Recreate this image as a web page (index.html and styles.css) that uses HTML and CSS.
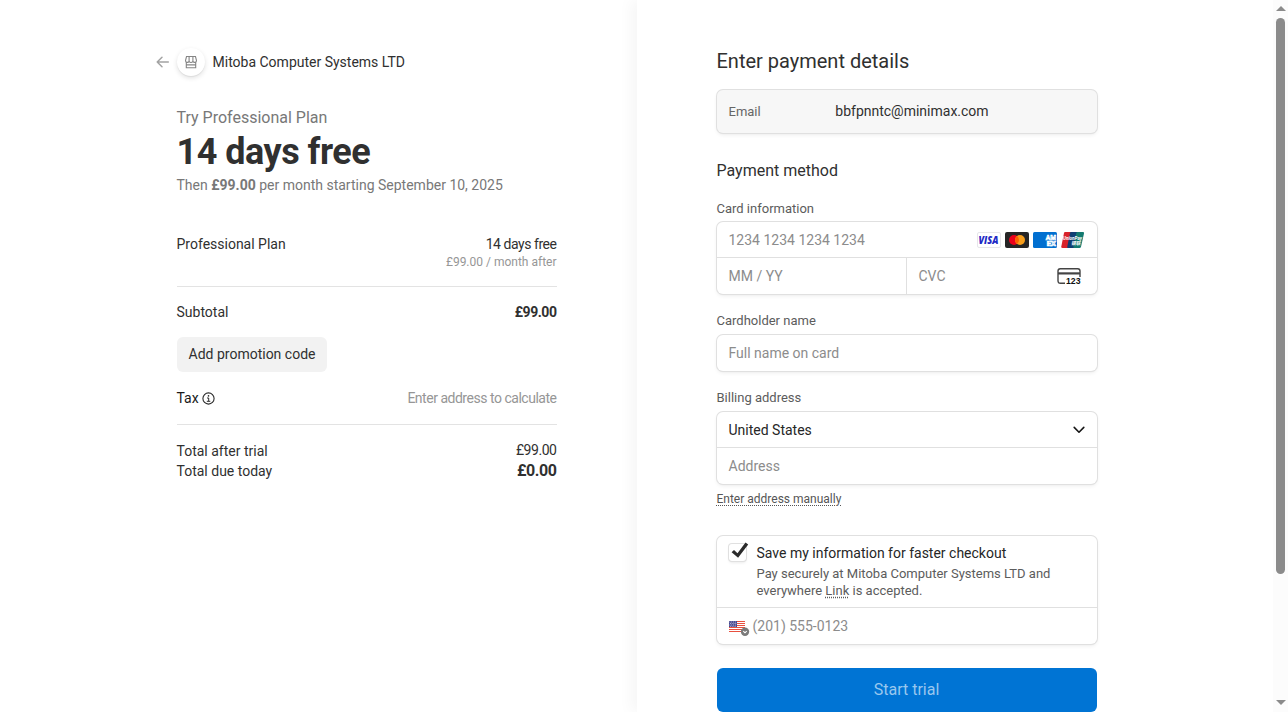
FILE: index.html
```html
<!DOCTYPE html>
<html lang="en">
<head>
<meta charset="utf-8">
<title>Mitoba Computer Systems LTD</title>
<link rel="stylesheet" href="styles.css">
</head>
<body>
<main class="summary">
  <div class="summary-inner">
    <header class="merchant">
      <svg class="back" width="14" height="14" viewBox="0 0 14 14" fill="none" stroke="#a3a3a3" stroke-width="1.5" stroke-linecap="round" stroke-linejoin="round"><path d="M12.300 7H1.200M6 2.2 1.2 7 6 11.8"/></svg>
      <span class="logo"><svg width="14" height="14" viewBox="0 0 14 14" fill="none" stroke="#858585" stroke-width="1.100"><path d="M2.500 1.500h9l1 4c0 2.200-2.600 2.500-3.600.9-.9 1.500-2.900 1.500-3.800 0C4.100 8 1.500 7.700 1.500 5.500zM5.100 1.500v4.800M8.900 1.500v4.800M2.300 7.300v5.500h9.400V7.300M2.300 9.900h9.400"/></svg></span>
      <span class="merchant-name">Mitoba Computer Systems LTD</span>
    </header>
    <div class="plan">Try Professional Plan</div>
    <h1 class="headline">14 days free</h1>
    <div class="then">Then <b>£99.00</b> per month starting September 10, 2025</div>
    <div class="row item"><span>Professional Plan</span><span class="price">14 days free</span></div>
    <div class="after">£99.00 / month after</div>
    <div class="row subtotal"><span>Subtotal</span><b class="price">£99.00</b></div>
    <button class="promo">Add promotion code</button>
    <div class="row tax"><span class="tax-label">Tax <svg width="13" height="13" viewBox="0 0 13 13" fill="none" stroke="#2b2b2b"><circle cx="6.500" cy="6.500" r="5.600" stroke-width="1.100"/><path d="M5 6h1.700v3.200M4.800 9.300h3.500"/><circle cx="6.500" cy="3.900" r=".8" fill="#2b2b2b" stroke="none"/></svg></span><span class="tax-note">Enter address to calculate</span></div>
    <div class="row total"><span>Total after trial</span><span class="price raised">£99.00</span></div>
    <div class="row due"><span>Total due today</span><b class="price">£0.00</b></div>
  </div>
</main>
<section class="payment">
  <form class="form">
    <h2 class="title">Enter payment details</h2>
    <div class="box email"><span class="email-label">Email</span><span class="email-value">bbfpnntc@minimax.com</span></div>
    <h3 class="subtitle">Payment method</h3>
    <div class="label label-card">Card information</div>
    <div class="box">
      <div class="field line"><span class="hint number">1234 1234 1234 1234</span>
        <span class="brands">
          <svg width="24" height="16" viewBox="0 0 24 16"><rect x=".5" y=".5" width="23" height="15" rx="1.500" fill="#fff" stroke="#e6e6ea"/><text x="1.500" y="11.500" class="visa" textLength="20" lengthAdjust="spacingAndGlyphs">VISA</text></svg>
          <svg width="24" height="16" viewBox="0 0 24 16"><rect width="24" height="16" rx="2" fill="#252525"/><circle cx="9" cy="8" r="5" fill="#eb001b"/><circle cx="15" cy="8" r="5" fill="#f79e1b"/><path d="M12 4a5 5 0 0 1 0 8 5 5 0 0 1 0-8z" fill="#ff5f00"/></svg>
          <svg width="24" height="16" viewBox="0 0 24 16"><rect width="24" height="16" rx="1.500" fill="#016fd0"/><g class="amex"><text x="12.800" y="7.500" textLength="10.200" lengthAdjust="spacingAndGlyphs">AM</text><text x="13.800" y="13.700" textLength="9.200" lengthAdjust="spacingAndGlyphs">EX</text></g></svg>
          <svg width="24" height="16" viewBox="0 0 24 16"><path d="M4 0h7L7.500 16H1.500Q0 16 .3 14.500L3 1Q3.200 0 4 0z" fill="#d8222a"/><path d="M10 0h7l-3.500 16H7q-1 0-.7-1.500L9 1q.2-1 1-1z" fill="#0f3e73"/><path d="M16.500 0h5.500q1.300 0 1 1.400L20 14.700Q19.700 16 18.500 16H13q-.9 0-.6-1.300L15.300 1q.2-1 1.200-1z" fill="#137a70"/><g class="union"><text x="2" y="7.500" textLength="19" lengthAdjust="spacingAndGlyphs">UnionPay</text><text x="10" y="13.300" class="union-cn" textLength="9.500" lengthAdjust="spacingAndGlyphs">银联</text></g></svg>
        </span></div>
      <div class="pair"><div class="field expiry"><span class="hint">MM / YY</span></div>
        <div class="field cvc"><span class="hint">CVC</span><svg width="24" height="17" viewBox="0 0 24 17"><path d="M8 15.300H3.500Q1 15.300 1 12.800V3Q1 .8 3.300.8H20.700Q23 .8 23 3V9" fill="none" stroke="#444" stroke-width="1.400"/><path d="M1 4.300h22v2.200H1z" fill="#444"/><text x="9" y="16.200" class="digits" textLength="14.500" lengthAdjust="spacingAndGlyphs">123</text></svg></div></div>
    </div>
    <div class="label label-name">Cardholder name</div>
    <div class="box"><div class="field"><span class="hint">Full name on card</span></div></div>
    <div class="label label-billing">Billing address</div>
    <div class="box">
      <div class="field line"><span class="country">United States</span><svg class="chevron" width="12" height="8" viewBox="0 0 12 8" fill="none" stroke="#171717" stroke-width="1.600" stroke-linecap="round" stroke-linejoin="round"><path d="M1.200 1.400 6 6.200l4.800-4.800"/></svg></div>
      <div class="field"><span class="hint">Address</span></div>
    </div>
    <a class="manual">Enter address manually</a>
    <div class="box save">
      <div class="save-main line"><span class="check"><svg width="20" height="19" viewBox="0 0 20 19"><path d="M2.600 10.300 5 8l3.500 3.300L16.500.4l2.700 2.200L9.100 15.700z" fill="#2b2b2b"/></svg></span>
        <div><div class="save-title">Save my information for faster checkout</div><div class="save-text">Pay securely at Mitoba Computer Systems LTD and<br>everywhere <a class="link">Link</a> is accepted.</div></div></div>
      <div class="field phone"><svg class="flag" width="21" height="16" viewBox="0 0 21 16"><rect width="16" height="11" fill="#fff"/><path d="M0 .5h16M0 2.500h16M0 4.500h16M0 6.500h16M0 8.500h16M0 10.500h16" stroke="#e8503f"/><rect width="8" height="6" fill="#45478f"/><path d="M.5 1h7M1 2.500h7M.5 4h7M1 5.300h6" stroke="#fff" stroke-width=".7" stroke-dasharray=".8 1"/><circle cx="16" cy="10.800" r="4.200" fill="#7b7b7b"/><path d="m14.300 10.200 1.700 1.600 1.700-1.600" fill="none" stroke="#fff" stroke-width="1.100"/></svg><span class="hint">(201) 555-0123</span></div>
    </div>
    <button class="submit" type="button">Start trial</button>
  </form>
</section>
<aside class="scrollbar"><i class="arrow up"></i><i class="thumb"></i><i class="arrow down"></i></aside>
</body>
</html>
```
FILE: styles.css
```css
* { box-sizing: border-box; }
body { margin: 0; width: 1288px; height: 712px; overflow: hidden; display: flex; background: #fff; color: #303030; font: 14px/20px Roboto, sans-serif; }
h1, h2, h3 { margin: 0; font-weight: 400; }
button { border: 0; padding: 0; font: inherit; color: inherit; }
b { font-weight: 700; }
svg { display: block; flex: none; overflow: visible; }
.summary { width: 636.5px; padding: 48px 80px 0 176.5px; }
.summary-inner { width: 380px; }
.merchant { display: flex; align-items: center; height: 28px; margin-left: -21px; }
.logo { width: 28px; height: 28px; margin: 0 8px 0 7px; border-radius: 50%; display: grid; place-items: center; background: #fff; box-shadow: 0 2px 5px rgba(0,0,0,.12), 0 1px 1px rgba(0,0,0,.06); }
.plan { margin-top: 32px; font-size: 16px; color: #787878; }
.headline { height: 44px; margin-top: 2px; font-size: 36px; line-height: 44px; font-weight: 700; letter-spacing: -.5px; }
.then { margin-top: 1px; color: #787878; }
.row { display: flex; justify-content: space-between; }
.price { letter-spacing: -.45px; }
.item { margin-top: 39px; }
.after { height: 33px; line-height: 16px; font-size: 12px; color: #969696; text-align: right; border-bottom: 1px solid #e3e3e3; }
.subtotal { margin-top: 15px; }
.promo { width: 150px; height: 35px; margin-top: 15px; padding: 0 0 2px 1px; border-radius: 6px; background: #f2f2f2; display: block; }
.tax { height: 37px; margin-top: 16px; border-bottom: 1px solid #e3e3e3; }
.tax-label { display: flex; align-items: center; height: 20px; gap: 3.5px; color: #1a1a1a; }
.tax-label svg { margin-top: 1px; }
.tax-note { letter-spacing: -.48px; color: #969696; }
.total { margin-top: 16px; }
.raised { line-height: 18px; }
.due .price { font-size: 16px; }
.payment { width: 636.5px; padding: 48px 0 0 80px; box-shadow: -6px 0 14px rgba(0,0,0,.04); }
.form { width: 380px; }
.title { height: 26px; font-size: 20px; line-height: 26px; }
.box { border-radius: 6px; background: #fff; box-shadow: 0 0 0 1px #e0e0e0, 0 2px 4px rgba(0,0,0,.07), 0 1px 1.5px rgba(0,0,0,.05); }
.email { display: flex; align-items: center; height: 43px; margin-top: 16px; padding: 0 12px; background: #f7f7f7; }
.email-label { width: 106.8px; font-size: 13px; color: #666; }
.email-value { padding-bottom: 1px; }
.subtitle { margin-top: 28px; font-size: 16px; line-height: 20px; }
.label { height: 16px; font-size: 13px; line-height: 16px; color: #5c5c5c; }
.label-card { margin: 20px 0 5px; }
.label-name { margin: 19px 0 6px; }
.label-billing { margin: 19px 0 6px; }
.field { display: flex; align-items: center; height: 36px; padding: 0 12px; }
.line { border-bottom: 1px solid #e0e0e0; }
.hint { color: #8c8c8c; }
.brands { display: flex; gap: 4px; margin-left: auto; }
.visa { font: italic 800 9.8px "Open Sans", sans-serif; fill: #2129c5; }
.amex { font: 700 6.5px Roboto, sans-serif; fill: #016fd0; stroke: #fff; stroke-width: .7px; }
.union { font: italic 700 5.5px Roboto, sans-serif; fill: #fff; }
.union-cn { font: italic 700 5px "Noto Sans CJK SC", sans-serif; }
.pair { display: flex; }
.expiry { width: 190px; border-right: 1px solid #e0e0e0; }
.cvc { width: 190px; justify-content: space-between; padding-right: 15.5px; }
.digits { font: 700 8.3px "Liberation Sans", sans-serif; fill: #111; }
.country { color: #262626; }
.chevron { margin-left: auto; margin-top: 1px; }
.manual { display: block; width: max-content; height: 16px; margin-top: 7px; font-size: 12px; line-height: 16px; color: #555; text-decoration: underline dotted; text-underline-offset: 2px; }
.save { margin-top: 29px; }
.save-main { display: flex; height: 72px; padding: 7px 12px 0; }
.check { width: 17px; height: 17px; margin: 1px 11px 0 0; border-radius: 3px; box-shadow: 0 0 0 1px #e0e0e0, 0 2px 3px rgba(0,0,0,.08); }
.check svg { margin-top: -2px; }
.save-title { line-height: 20px; color: #262626; }
.save-text { margin-top: 2px; font-size: 13px; line-height: 17px; color: #5c5c5c; white-space: nowrap; }
.link { text-decoration: underline dotted; text-underline-offset: 2px; }
.phone { gap: 3px; }
.flag { margin-top: 6px; }
.submit { display: block; width: 380px; height: 44px; margin-top: 24px; border-radius: 6px; background: #0074d4; color: #99c7ee; font-size: 16px; }
.scrollbar { display: flex; flex-direction: column; align-items: center; width: 15px; height: 712px; padding-top: 6px; background: #fcfcfc; }
.arrow { width: 0; height: 0; border: 5px solid transparent; }
.up { border-top: 0; border-bottom-color: #8b8b8b; }
.down { border-bottom: 0; border-top-color: #8b8b8b; margin-top: 126px; }
.thumb { width: 9px; height: 556px; margin-top: 7px; border-radius: 5px; background: #8b8b8b; }
```
